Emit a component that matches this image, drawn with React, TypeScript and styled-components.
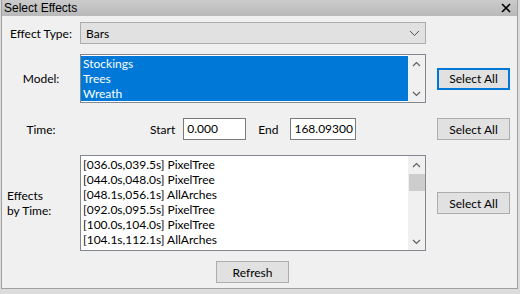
import styled, { createGlobalStyle, css } from "styled-components";

const GlobalStyle = createGlobalStyle`
    html, body {
        margin: 0;
        padding: 0;
        background: #dcdcdc;
    }
    body {
        padding-left: 1px;
        font-family: Lato, "Open Sans", sans-serif;
        font-size: 12px;
        color: #000;
    }
`;

const Window = styled.div`
    width: 515px;
    height: 288px;
    border: 1px solid #a0a0a0;
    border-top: none;
    background: #f0f0f0;
    display: flex;
    flex-direction: column;
`;

const TitleBar = styled.div`
    height: 16px;
    display: flex;
    align-items: center;
    justify-content: space-between;
    padding: 0 6px 0 2px;
    background: linear-gradient(#cbcbcb, #b9b9b9);
    font-family: "Liberation Sans", Arial, sans-serif;
    font-size: 12px;
`;

const Content = styled.div`
    display: flex;
    flex-direction: column;
`;

const Row = styled.div<{ $top: number; $height: number }>`
    display: grid;
    grid-template-columns: 78px 346px 84px;
    align-items: center;
    margin-top: ${p => p.$top}px;
    height: ${p => p.$height}px;
`;

const Label = styled.div<{ $left?: boolean }>`
    text-align: ${p => (p.$left ? "left" : "center")};
    padding-left: ${p => (p.$left ? "5px" : "0")};
    line-height: 15px;
`;

const Combo = styled.div`
    height: 20px;
    border: 1px solid #adadad;
    background: #e1e1e1;
    display: flex;
    align-items: center;
    justify-content: space-between;
    padding: 0 5px 0 5px;
`;

const ListBox = styled.div<{ $height: number }>`
    height: ${p => p.$height - 2}px;
    border: 1px solid #828790;
    background: #fff;
    display: flex;
    overflow: hidden;
`;

const Items = styled.div`
    flex: 1;
    padding-top: 1px;
`;

const Item = styled.div<{ $selected?: boolean }>`
    height: 15px;
    line-height: 15px;
    padding-left: 2px;
    white-space: nowrap;
    ${p =>
        p.$selected &&
        css`
            background: #0078d7;
            color: #fff;
        `}
`;

const ScrollBar = styled.div`
    width: 17px;
    background: #f0f0f0;
    display: flex;
    flex-direction: column;
    justify-content: space-between;
    align-items: center;
    position: relative;
`;

const Arrow = styled.div`
    height: 17px;
    display: flex;
    align-items: center;
    justify-content: center;
`;

const Thumb = styled.div`
    position: absolute;
    left: 1px;
    right: 0;
    top: 18px;
    height: 17px;
    background: #cdcdcd;
`;

const Button = styled.button<{ $focused?: boolean }>`
    justify-self: end;
    width: 73px;
    height: 22px;
    background: #e1e1e1;
    border: ${p => (p.$focused ? "2px solid #0078d7" : "1px solid #adadad")};
    font-family: inherit;
    font-size: 12px;
    color: #000;
    padding: 0;
`;

const TimeGroup = styled.div`
    display: flex;
    align-items: center;
    justify-content: center;
`;

const TimeLabel = styled.span<{ $before?: number; $after: number }>`
    margin-left: ${p => p.$before ?? 0}px;
    margin-right: ${p => p.$after}px;
`;

const TextInput = styled.div`
    min-width: 56px;
    height: 20px;
    border: 1px solid #7a7a7a;
    background: #fff;
    padding: 0 2px 0 3px;
    line-height: 20px;
    white-space: nowrap;
    box-sizing: content-box;
`;

const Footer = styled.div`
    display: flex;
    justify-content: center;
    margin-top: 10px;
    padding-right: 14px;
`;

function Chevron({ up }: { up?: boolean }) {
    return (
        <svg width="9" height="6" viewBox="0 0 9 6">
            <path d={up ? "M1 5 L4.5 1.5 L8 5" : "M1 1 L4.5 4.5 L8 1"} fill="none" stroke="#606060" strokeWidth="1.2" />
        </svg>
    );
}

function Scroll({ thumb }: { thumb?: boolean }) {
    return (
        <ScrollBar>
            <Arrow>
                <Chevron up />
            </Arrow>
            {thumb && <Thumb />}
            <Arrow>
                <Chevron />
            </Arrow>
        </ScrollBar>
    );
}

const effects = [
    "[036.0s,039.5s] PixelTree",
    "[044.0s,048.0s] PixelTree",
    "[048.1s,056.1s] AllArches",
    "[092.0s,095.5s] PixelTree",
    "[100.0s,104.0s] PixelTree",
    "[104.1s,112.1s] AllArches"
];

export default function App() {
    return (
        <>
            <GlobalStyle />
            <Window>
                <TitleBar>
                    <span>Select Effects</span>
                    <svg width="10" height="10" viewBox="0 0 10 10">
                        <path d="M1 1 L9 9 M9 1 L1 9" stroke="#000" strokeWidth="1.6" />
                    </svg>
                </TitleBar>
                <Content>
                    <Row $top={6} $height={22}>
                        <Label>Effect Type:</Label>
                        <Combo>
                            <span>Bars</span>
                            <svg width="11" height="7" viewBox="0 0 11 7">
                                <path d="M1 1 L5.5 5.5 L10 1" fill="none" stroke="#505050" strokeWidth="1" />
                            </svg>
                        </Combo>
                        <span />
                    </Row>
                    <Row $top={10} $height={49}>
                        <Label>Model:</Label>
                        <ListBox $height={49}>
                            <Items>
                                <Item $selected>Stockings</Item>
                                <Item $selected>Trees</Item>
                                <Item $selected>Wreath</Item>
                            </Items>
                            <Scroll />
                        </ListBox>
                        <Button $focused>Select All</Button>
                    </Row>
                    <Row $top={15} $height={22}>
                        <Label>Time:</Label>
                        <TimeGroup>
                            <TimeLabel $after={8}>Start</TimeLabel>
                            <TextInput>0.000</TextInput>
                            <TimeLabel $before={12} $after={12}>
                                End
                            </TimeLabel>
                            <TextInput>168.09300</TextInput>
                        </TimeGroup>
                        <Button>Select All</Button>
                    </Row>
                    <Row $top={15} $height={96}>
                        <Label $left>
                            Effects
                            <br />
                            by Time:
                        </Label>
                        <ListBox $height={96}>
                            <Items>
                                {effects.map(e => (
                                    <Item key={e}>{e}</Item>
                                ))}
                            </Items>
                            <Scroll thumb />
                        </ListBox>
                        <Button>Select All</Button>
                    </Row>
                    <Footer>
                        <Button>Refresh</Button>
                    </Footer>
                </Content>
            </Window>
        </>
    );
}
